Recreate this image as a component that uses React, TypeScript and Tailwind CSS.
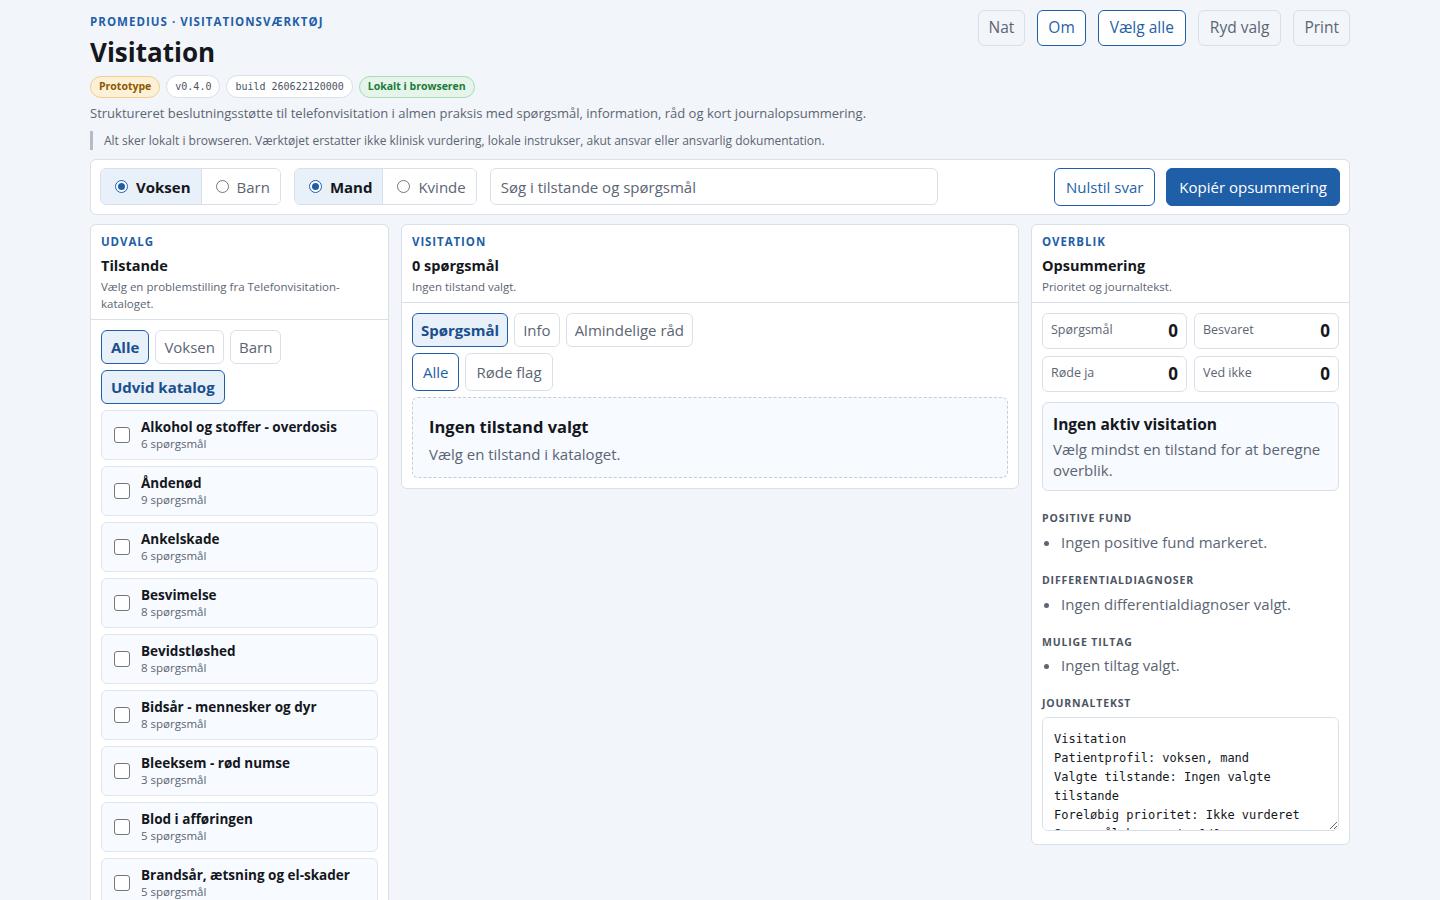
import React from 'react';

const font = { fontFamily: '"Open Sans", "Noto Sans", sans-serif' };

const conditions = [
  { name: 'Alkohol og stoffer - overdosis', count: 6 },
  { name: 'Åndenød', count: 9 },
  { name: 'Ankelskade', count: 6 },
  { name: 'Besvimelse', count: 8 },
  { name: 'Bevidstløshed', count: 8 },
  { name: 'Bidsår - mennesker og dyr', count: 8 },
  { name: 'Bleeksem - rød numse', count: 3 },
  { name: 'Blod i afføringen', count: 5 },
  { name: 'Brandsår, ætsning og el-skader', count: 5 },
  { name: 'Brystsmerter', count: 7 },
  { name: 'Diarré', count: 6 },
];

const Radio: React.FC<{ checked?: boolean }> = ({ checked }) => (
  <span
    className={`inline-flex h-[13px] w-[13px] shrink-0 items-center justify-center rounded-full border ${
      checked ? 'border-[#1f5fa8]' : 'border-[#767676]'
    } bg-white`}
  >
    {checked && <span className="h-[7px] w-[7px] rounded-full bg-[#1f5fa8]" />}
  </span>
);

const CardHead: React.FC<{ eyebrow: string; title: string; sub: React.ReactNode }> = ({ eyebrow, title, sub }) => (
  <div className="border-b border-[#d9e0ea] px-[10px] pt-[8px] pb-[7px]">
    <div className="text-[11.5px] font-bold uppercase tracking-[0.08em] text-[#1f5fa8]">{eyebrow}</div>
    <div className="mt-[5px] text-[14.5px] font-bold text-[#14171c]">{title}</div>
    <div className="mt-[1px] text-[11.5px] leading-[17px] text-[#5b6573]">{sub}</div>
  </div>
);

const App: React.FC = () => {
  return (
    <div className="min-h-screen bg-[#f2f5f9] text-[#14171c]" style={font}>
      <div className="mx-auto max-w-[1260px] pb-6">
        {/* Header */}
        <div className="flex items-start justify-between">
          <div className="pt-[13px]">
            <div className="text-[11.5px] font-bold uppercase tracking-[0.09em] text-[#1f5fa8]">
              Promedius · Visitationsværktøj
            </div>
            <h1 className="mt-[5px] text-[26px] font-bold leading-[34px] text-[#14171c]">Visitation</h1>
            <div className="mt-[6px] flex items-center gap-[6px]">
              <span className="rounded-full border border-[#efd08e] bg-[#fcf0d6] px-2 py-[2px] text-[10.5px] font-bold text-[#8a5a00]">
                Prototype
              </span>
              <span className="rounded-full border border-[#d9e0ea] bg-white px-2 py-[3px] text-[10px] text-[#4b5563]" style={{ fontFamily: '"DejaVu Sans Mono", monospace' }}>
                v0.4.0
              </span>
              <span className="rounded-full border border-[#d9e0ea] bg-white px-2 py-[3px] text-[10px] text-[#4b5563]" style={{ fontFamily: '"DejaVu Sans Mono", monospace' }}>
                build 260622120000
              </span>
              <span className="rounded-full border border-[#a9dbb6] bg-[#e5f5ea] px-2 py-[2px] text-[10.5px] font-bold text-[#1d7a3b]">
                Lokalt i browseren
              </span>
            </div>
            <p className="mt-[6px] text-[13px] text-[#5b6573]">
              Struktureret beslutningsstøtte til telefonvisitation i almen praksis med spørgsmål, information, råd og kort journalopsummering.
            </p>
            <div className="mt-[7px] border-l-[3px] border-[#b4bcc8] pl-[11px] text-[12px] leading-[19px] text-[#5b6573]">
              Alt sker lokalt i browseren. Værktøjet erstatter ikke klinisk vurdering, lokale instrukser, akut ansvar eller ansvarlig dokumentation.
            </div>
          </div>
          <div className="mt-[10px] flex gap-3">
            <button className="h-[36px] rounded-md border border-[#d9e0ea] bg-[#f2f5f9] px-[10px] text-[15.5px] text-[#5b6573]">Nat</button>
            <button className="h-[36px] rounded-md border border-[#1f5fa8] bg-white px-[10px] text-[15.5px] text-[#1f5fa8]">Om</button>
            <button className="h-[36px] rounded-md border border-[#1f5fa8] bg-white px-[11px] text-[15.5px] text-[#1f5fa8]">Vælg alle</button>
            <button className="h-[36px] rounded-md border border-[#d9e0ea] bg-[#f2f5f9] px-[11px] text-[15.5px] text-[#5b6573]">Ryd valg</button>
            <button className="h-[36px] rounded-md border border-[#d9e0ea] bg-[#f2f5f9] px-[10px] text-[15.5px] text-[#5b6573]">Print</button>
          </div>
        </div>

        {/* Toolbar */}
        <div className="mt-[9px] flex items-center gap-[13px] rounded-md border border-[#d9e0ea] bg-white px-[9px] py-[8px]">
          <div className="flex h-[37px] overflow-hidden rounded-md border border-[#d9e0ea]">
            <label className="flex items-center gap-[8px] bg-[#e8f0fa] pl-[14px] pr-[10px] text-[15px] font-bold text-[#14171c]">
              <Radio checked /> Voksen
            </label>
            <label className="flex items-center gap-[8px] border-l border-[#d9e0ea] bg-white pl-[14px] pr-[10px] text-[15px] text-[#5b6573]">
              <Radio /> Barn
            </label>
          </div>
          <div className="flex h-[37px] overflow-hidden rounded-md border border-[#d9e0ea]">
            <label className="flex items-center gap-[8px] bg-[#e8f0fa] pl-[14px] pr-[10px] text-[15px] font-bold text-[#14171c]">
              <Radio checked /> Mand
            </label>
            <label className="flex items-center gap-[8px] border-l border-[#d9e0ea] bg-white pl-[14px] pr-[10px] text-[15px] text-[#5b6573]">
              <Radio /> Kvinde
            </label>
          </div>
          <input
            className="h-[37px] w-[448px] rounded-md border border-[#d9e0ea] bg-white px-[10px] text-[15px] text-[#14171c] outline-none placeholder:text-[#5b6573]"
            placeholder="Søg i tilstande og spørgsmål"
          />
          <div className="ml-auto flex gap-[11px]">
            <button className="h-[38px] rounded-md border border-[#1f5fa8] bg-white px-[11px] text-[15px] text-[#1f5fa8]">Nulstil svar</button>
            <button className="h-[38px] rounded-md border border-[#1f5fa8] bg-[#1f5fa8] px-[12px] text-[15px] text-white">Kopiér opsummering</button>
          </div>
        </div>

        {/* Columns */}
        <div className="mt-[9px] grid grid-cols-[299px_1fr_319px] items-start gap-3">
          {/* Left */}
          <div className="rounded-md border border-[#d9e0ea] bg-white">
            <CardHead
              eyebrow="Udvalg"
              title="Tilstande"
              sub={<>Vælg en problemstilling fra Telefonvisitation-<br />kataloget.</>}
            />
            <div className="px-[10px] pt-[10px] pb-3">
              <div className="flex gap-[6px]">
                <button className="h-[34px] rounded-md border border-[#1f5fa8] bg-[#e8f0fa] px-[9px] text-[15px] font-bold text-[#1b4f8c]">Alle</button>
                <button className="h-[34px] rounded-md border border-[#d9e0ea] bg-white px-[8px] text-[15px] text-[#5b6573]">Voksen</button>
                <button className="h-[34px] rounded-md border border-[#d9e0ea] bg-white px-[8px] text-[15px] text-[#5b6573]">Barn</button>
              </div>
              <button className="mt-[6px] h-[34px] rounded-md border border-[#1f5fa8] bg-[#e8f0fa] px-[9px] text-[15px] font-bold text-[#1b4f8c]">
                Udvid katalog
              </button>
              <div className="mt-[6px] flex flex-col gap-[6px]">
                {conditions.map((c) => (
                  <div key={c.name} className="flex h-[50px] items-center gap-[11px] rounded-md border border-[#dfe6ef] bg-[#f7faff] px-[12px]">
                    <span className="h-[16px] w-[16px] shrink-0 rounded-[3px] border border-[#767676] bg-white" />
                    <div>
                      <div className="text-[13.5px] font-bold leading-[17px] text-[#14171c]">{c.name}</div>
                      <div className="text-[11.5px] leading-[15px] text-[#5b6573]">{c.count} spørgsmål</div>
                    </div>
                  </div>
                ))}
              </div>
            </div>
          </div>

          {/* Middle */}
          <div className="rounded-md border border-[#d9e0ea] bg-white">
            <CardHead eyebrow="Visitation" title="0 spørgsmål" sub="Ingen tilstand valgt." />
            <div className="px-[10px] pt-[10px] pb-[10px]">
              <div className="flex gap-[6px]">
                <button className="h-[34px] rounded-md border border-[#1f5fa8] bg-[#e8f0fa] px-[8px] text-[15px] font-bold text-[#1b4f8c]">Spørgsmål</button>
                <button className="h-[34px] rounded-md border border-[#d9e0ea] bg-white px-[8px] text-[15px] text-[#5b6573]">Info</button>
                <button className="h-[34px] rounded-md border border-[#d9e0ea] bg-white px-[8px] text-[15px] text-[#5b6573]">Almindelige råd</button>
              </div>
              <div className="mt-[6px] flex gap-[6px]">
                <button className="h-[38px] rounded-md border border-[#1f5fa8] bg-white px-[10px] text-[15px] text-[#1f5fa8]">Alle</button>
                <button className="h-[38px] rounded-md border border-[#d9e0ea] bg-white px-[10px] text-[15px] text-[#5b6573]">Røde flag</button>
              </div>
              <div className="mt-[6px] rounded-md border border-dashed border-[#c3ccd8] bg-[#f7faff] px-4 pt-[17px] pb-[12px]">
                <div className="text-[16.5px] font-bold text-[#14171c]">Ingen tilstand valgt</div>
                <div className="mt-[3px] text-[15px] text-[#5b6573]">Vælg en tilstand i kataloget.</div>
              </div>
            </div>
          </div>

          {/* Right */}
          <div className="rounded-md border border-[#d9e0ea] bg-white">
            <CardHead eyebrow="Overblik" title="Opsummering" sub="Prioritet og journaltekst." />
            <div className="px-[10px] pt-[10px] pb-[13px]">
              <div className="grid grid-cols-2 gap-[7px]">
                {[
                  ['Spørgsmål', '0'],
                  ['Besvaret', '0'],
                  ['Røde ja', '0'],
                  ['Ved ikke', '0'],
                ].map(([label, value]) => (
                  <div key={label} className="flex h-[36px] items-center justify-between rounded-md border border-[#d9e0ea] bg-white px-[8px]">
                    <span className="text-[12.5px] text-[#5b6573]">{label}</span>
                    <span className="text-[17px] font-bold text-[#14171c]">{value}</span>
                  </div>
                ))}
              </div>
              <div className="mt-[10px] rounded-md border border-[#d9e0ea] bg-[#f7faff] px-[10px] pt-[10px] pb-[9px]">
                <div className="text-[15.5px] font-bold text-[#14171c]">Ingen aktiv visitation</div>
                <div className="mt-[3px] text-[15px] leading-[21px] text-[#5b6573]">Vælg mindst en tilstand for at beregne overblik.</div>
              </div>

              {[
                ['Positive fund', 'Ingen positive fund markeret.'],
                ['Differentialdiagnoser', 'Ingen differentialdiagnoser valgt.'],
                ['Mulige tiltag', 'Ingen tiltag valgt.'],
              ].map(([h, item]) => (
                <div key={h} className="mt-[20px]">
                  <div className="text-[10.5px] font-bold uppercase tracking-[0.08em] text-[#4b5563]">{h}</div>
                  <ul className="mt-[5px] list-disc pl-[19px] text-[15px] leading-[21px] text-[#5b6573] marker:text-[#5b6573]">
                    <li>{item}</li>
                  </ul>
                </div>
              ))}

              <div className="mt-[20px] text-[10.5px] font-bold uppercase tracking-[0.08em] text-[#4b5563]">Journaltekst</div>
              <textarea
                readOnly
                className="mt-[5px] block h-[114px] w-full resize-y rounded-md border border-[#d9e0ea] bg-white px-[11px] pt-[12px] text-[12px] leading-[19px] text-[#14171c] outline-none"
                style={{ fontFamily: '"DejaVu Sans Mono", monospace' }}
                value={
                  'Visitation\nPatientprofil: voksen, mand\nValgte tilstande: Ingen valgte tilstande\nForeløbig prioritet: Ikke vurderet\nSpørgsmål besvaret: 0/0'
                }
              />
            </div>
          </div>
        </div>
      </div>
    </div>
  );
};

export default App;
